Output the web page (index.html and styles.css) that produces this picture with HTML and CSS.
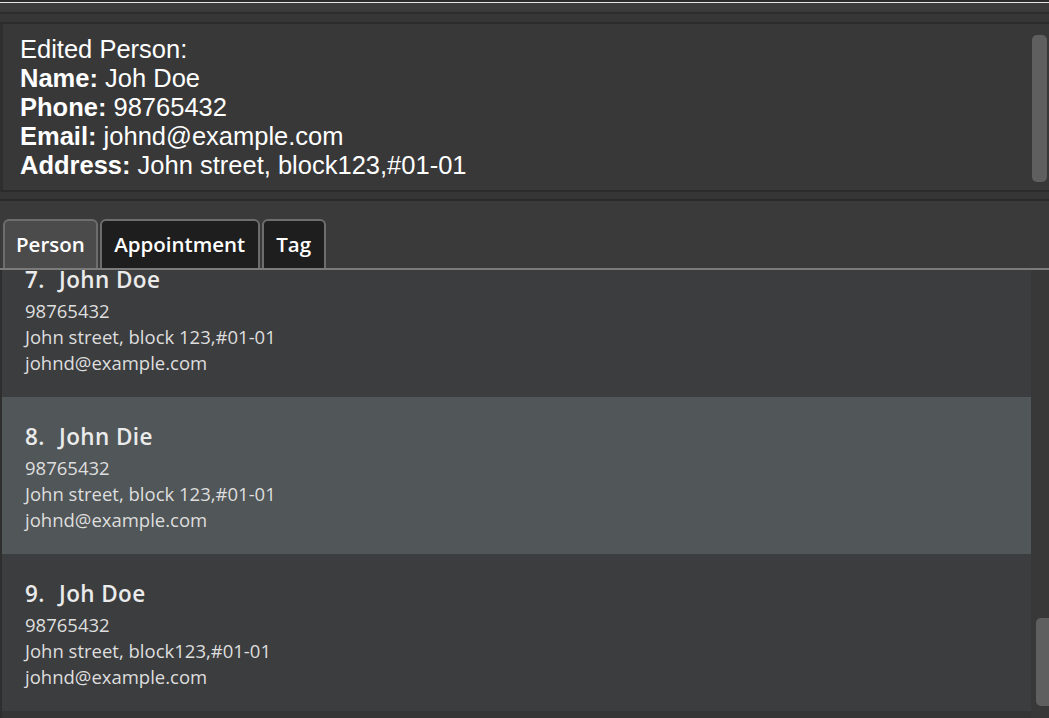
FILE: index.html
```html
<!DOCTYPE html>
<html>
<head>
<meta charset="utf-8">
<link rel="stylesheet" href="styles.css">
</head>
<body>
<div class="window">
  <div class="strip s1"></div>
  <div class="strip s2"></div>
  <div class="strip s3"></div>
  <div class="strip s4"></div>
  <div class="strip s5"></div>
  <div class="result">
    <div class="result-text">
      <div>Edited Person:</div>
      <div><b>Name:</b> Joh Doe</div>
      <div><b>Phone:</b> 98765432</div>
      <div><b>Email:</b> johnd@example.com</div>
      <div><b>Address:</b> John street, block123,#01-01</div>
    </div>
    <div class="vscroll"><div class="thumb"></div></div>
  </div>
  <div class="strip s6"></div>
  <div class="tabpane">
    <div class="tabs">
      <div class="tab selected">Person</div>
      <div class="tab">Appointment</div>
      <div class="tab">Tag</div>
    </div>
    <div class="listarea">
      <div class="list">
        <div class="cells">
          <div class="cell">
            <div class="name"><span class="idx">7.</span>John Doe</div>
            <div class="line">98765432</div>
            <div class="line">John street, block 123,#01-01</div>
            <div class="line">johnd@example.com</div>
          </div>
          <div class="cell sel">
            <div class="name"><span class="idx">8.</span>John Die</div>
            <div class="line">98765432</div>
            <div class="line">John street, block 123,#01-01</div>
            <div class="line">johnd@example.com</div>
          </div>
          <div class="cell">
            <div class="name"><span class="idx">9.</span>Joh Doe</div>
            <div class="line">98765432</div>
            <div class="line">John street, block123,#01-01</div>
            <div class="line">johnd@example.com</div>
          </div>
        </div>
      </div>
      <div class="listscroll"><div class="lthumb"></div></div>
    </div>
  </div>
</div>
</body>
</html>
```
FILE: styles.css
```css
html, body {
  margin: 0;
  padding: 0;
  background: #3a3a3a;
  overflow: hidden;
}
.window {
  width: 1049px;
  height: 718px;
  display: flex;
  flex-direction: column;
  overflow: hidden;
}
.strip { flex: none; }
.s1 { height: 2px; background: #2a2a2a; }
.s2 { height: 1px; background: #e4e4e4; }
.s3 { height: 9px; background: #3a3a3a; }
.s4 { height: 2px; background: #2c2c2c; }
.s5 { height: 8px; background: #363636; }
.s6 { height: 7px; background: #363636; border-bottom: 2px solid #2b2b2b; }

.result {
  flex: none;
  height: 166px;
  background: #383838;
  border-top: 2px solid #2b2b2b;
  border-bottom: 2px solid #2b2b2b;
  border-left: 3px solid #2e2e2e;
  display: flex;
}
.result-text {
  flex: 1;
  padding: 11px 0 0 17px;
  font-family: "Liberation Sans", Arial, sans-serif;
  font-size: 25.5px;
  line-height: 29px;
  color: #ffffff;
}
.result-text b { font-weight: 700; }
.vscroll {
  flex: none;
  width: 17px;
  padding: 11px 2px 8px 0;
  box-sizing: border-box;
  display: flex;
}
.thumb {
  flex: 1;
  background: #5f5f5f;
  border-radius: 5px;
}

.tabpane {
  flex: 1;
  display: flex;
  flex-direction: column;
  min-height: 0;
}
.tabs {
  flex: none;
  display: flex;
  gap: 2px;
  padding: 18px 0 0 3px;
  height: 69px;
  box-sizing: border-box;
  background: #3a3a3a;
  border-bottom: 2px solid #7b7b7b;
  align-items: flex-end;
}
.tab {
  height: 49px;
  box-sizing: border-box;
  border: 2px solid #6d6d6d;
  border-bottom: none;
  border-radius: 6px 6px 0 0;
  background: #1e1e1e;
  color: #ffffff;
  font-family: "Open Sans", sans-serif;
  font-weight: 600;
  font-size: 20.5px;
  padding: 0 12.5px 2px;
  display: flex;
  align-items: center;
}
.tab.selected { background: #4b4b4b; padding: 0 11px 2px; }

.listarea {
  flex: 1;
  display: flex;
  min-height: 0;
  background: #353535;
}
.list {
  flex: 1;
  overflow: hidden;
  border-left: 2px solid #2e2e2e;
}
.cells { margin-top: -30px; }
.cell {
  height: 157px;
  box-sizing: border-box;
  padding: 25px 0 0 23px;
  background: #3c3d3f;
  font-family: "Open Sans", sans-serif;
  color: #e2e2e2;
}
.cell.sel { background: #515658; }
.name {
  font-size: 22.5px;
  font-weight: 600;
  letter-spacing: 0.4px;
  line-height: 30px;
  margin-bottom: 3px;
  color: #ebebeb;
}
.idx { display: inline-block; width: 34px; }
.line {
  font-size: 18.5px;
  line-height: 26px;
  color: #dedede;
}
.listscroll {
  flex: none;
  width: 18px;
  background: #383838;
  display: flex;
  flex-direction: column;
  padding: 348px 0 12px 5px;
  box-sizing: border-box;
}
.lthumb {
  flex: 1;
  background: #5f5f5f;
  border-radius: 5px 0 0 5px;
}
```
